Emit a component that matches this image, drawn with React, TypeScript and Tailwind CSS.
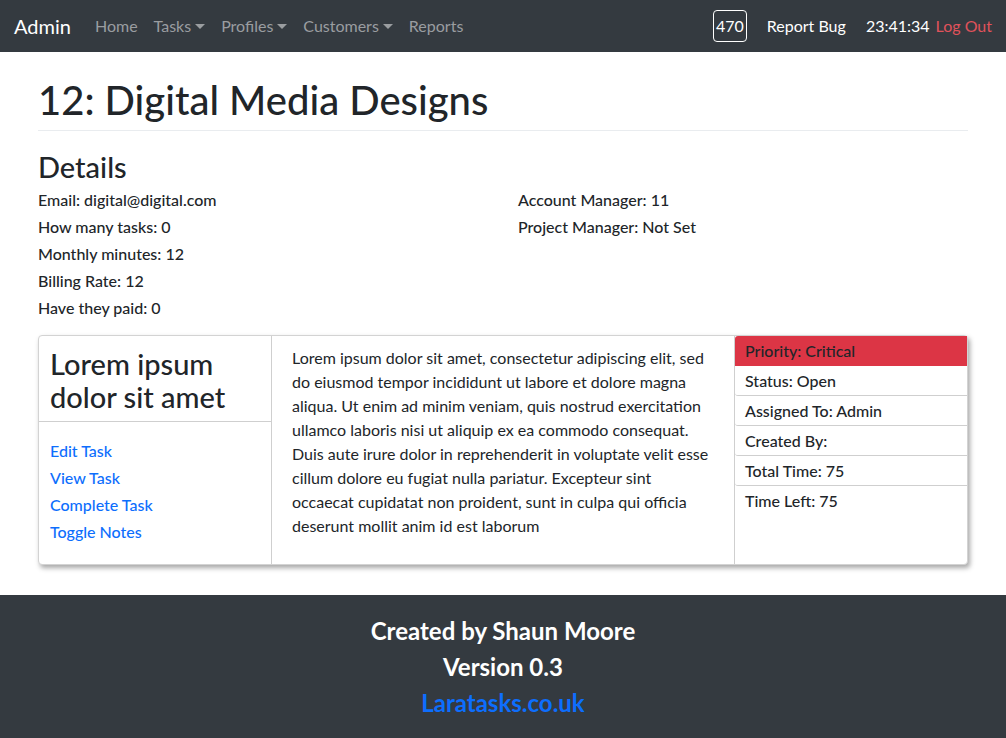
import React from 'react';

const font = { fontFamily: 'Lato, "Noto Sans", sans-serif' };

function Caret() {
  return (
    <span className="ml-1 inline-block h-0 w-0 border-x-[5px] border-t-[5px] border-x-transparent border-t-current align-middle" />
  );
}

function NavBar() {
  return (
    <nav className="flex h-[52px] items-center bg-[#343a40] pl-[14px] pr-[14px]">
      <a className="mr-4 text-[20px] text-white">Admin</a>
      <ul className="flex items-center text-[16px] text-[#9a9da0]">
        <li className="px-2">Home</li>
        <li className="flex items-center px-2">Tasks<Caret /></li>
        <li className="flex items-center px-2">Profiles<Caret /></li>
        <li className="flex items-center px-2">Customers<Caret /></li>
        <li className="px-2">Reports</li>
      </ul>
      <div className="ml-auto flex items-center text-[16px]">
        <span className="mr-[12px] flex h-[32px] w-[34px] items-center justify-center rounded-[4px] border border-white text-white">470</span>
        <span className="px-2 text-white">Report Bug</span>
        <span className="pl-3 pr-[6px] text-white">23:41:34</span>
        <span className="text-[#e0525b]">Log Out</span>
      </div>
    </nav>
  );
}

const detailsLeft = [
  'Email: digital@digital.com',
  'How many tasks: 0',
  'Monthly minutes: 12',
  'Billing Rate: 12',
  'Have they paid: 0',
];

const detailsRight = ['Account Manager: 11', 'Project Manager: Not Set'];

const taskInfo = [
  'Status: Open',
  'Assigned To: Admin',
  'Created By:',
  'Total Time: 75',
  'Time Left: 75',
];

const lorem =
  'Lorem ipsum dolor sit amet, consectetur adipiscing elit, sed do eiusmod tempor incididunt ut labore et dolore magna aliqua. Ut enim ad minim veniam, quis nostrud exercitation ullamco laboris nisi ut aliquip ex ea commodo consequat. Duis aute irure dolor in reprehenderit in voluptate velit esse cillum dolore eu fugiat nulla pariatur. Excepteur sint occaecat cupidatat non proident, sunt in culpa qui officia deserunt mollit anim id est laborum';

function TaskCard() {
  return (
    <div className="grid h-[230px] grid-cols-[232px_1fr_232px] rounded-[4px] border border-[#d3d3d3] bg-white shadow-[2px_3px_5px_rgba(0,0,0,0.35)]">
      {/* title + actions */}
      <div className="flex flex-col">
        <div className="border-b border-[#cfcfcf] px-[11px] pt-[11px] pb-[8px]">
          <h3 className="text-[29px] font-medium leading-[33px]">Lorem ipsum dolor sit amet</h3>
        </div>
        <div className="flex flex-col px-[11px] pt-[15px] text-[16px] font-medium text-[#0d6efd]">
          <a className="leading-[27px]">Edit Task</a>
          <a className="leading-[27px]">View Task</a>
          <a className="leading-[27px]">Complete Task</a>
          <a className="leading-[27px]">Toggle Notes</a>
        </div>
      </div>

      {/* description */}
      <div className="border-x border-[#cfcfcf] px-5 pt-[10px]">
        <p className="text-[16px] leading-[24px]">{lorem}</p>
      </div>

      {/* meta list */}
      <ul className="flex flex-col text-[16px] font-medium">
        <li className="flex h-[30px] items-center rounded-tl-[3px] bg-[#dc3545] px-[10px]">Priority: Critical</li>
        {taskInfo.map((t, i) => (
          <li
            key={t}
            className={
              i < taskInfo.length - 1
                ? 'flex h-[30px] items-center rounded-bl-[3px] border-b border-[#cfcfcf] px-[10px]'
                : 'flex h-[30px] items-center px-[10px]'
            }
          >
            {t}
          </li>
        ))}
      </ul>
    </div>
  );
}

export default function App() {
  return (
    <div className="min-h-[738px] bg-white text-[#212529]" style={font}>
      <NavBar />

      <main className="mx-auto w-[930px] pt-[24px]">
        <h1 className="border-b border-[#e9ecef] pb-[6px] text-[40px] font-medium leading-[48px]">
          12: Digital Media Designs
        </h1>

        <h2 className="mt-[17px] text-[29px] font-medium leading-[38px]">Details</h2>
        <div className="grid grid-cols-2 text-[16px] font-medium">
          <div>
            {detailsLeft.map((d) => (
              <p key={d} className="leading-[27px]">{d}</p>
            ))}
          </div>
          <div className="pl-[15px]">
            {detailsRight.map((d) => (
              <p key={d} className="leading-[27px]">{d}</p>
            ))}
          </div>
        </div>

        <div className="mt-[14px]">
          <TaskCard />
        </div>
      </main>

      <footer className="mt-[30px] flex flex-col items-center bg-[#343a40] pt-[18px] pb-[17px] text-[24px] font-bold leading-[36px] text-white">
        <span>Created by Shaun Moore</span>
        <span>Version 0.3</span>
        <a className="text-[#0d6efd]">Laratasks.co.uk</a>
      </footer>
    </div>
  );
}
